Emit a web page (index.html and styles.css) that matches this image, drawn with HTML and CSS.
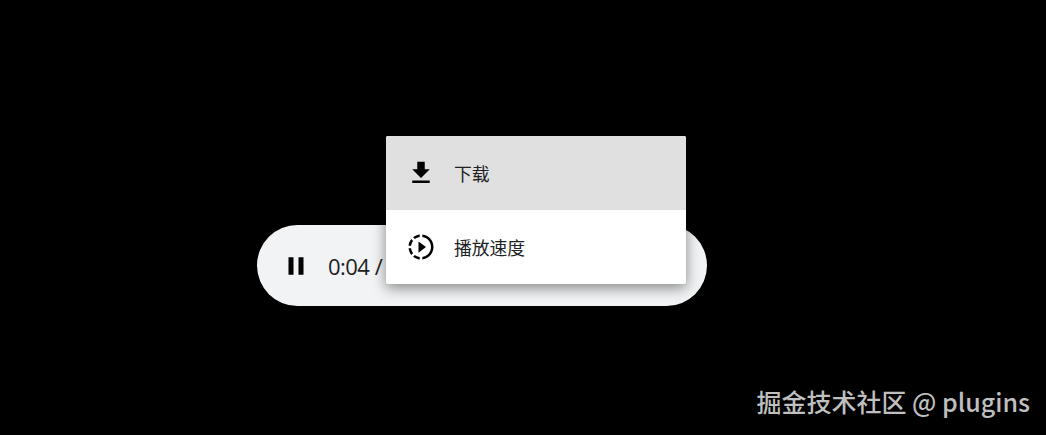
FILE: index.html
```html
<!DOCTYPE html>
<html lang="zh-CN">
<head>
    <meta charset="UTF-8">
    <meta name="viewport" content="width=device-width, initial-scale=1.0">
    <title>音频播放器</title>
    <link rel="stylesheet" href="styles.css">
</head>
<body>

    <div class="player">
        <button class="play-btn" aria-label="暂停">
            <svg class="icon" viewBox="0 0 24 24"><path d="M6 19h4V5H6v14zm8-14v14h4V5h-4z"/></svg>
        </button>
        <span class="time">0:04 /</span>

        <ul class="menu">
            <li class="menu-item active">
                <svg class="icon" viewBox="0 0 24 24"><path d="M19 9h-4V3H9v6H5l7 7 7-7zM5 18v2h14v-2H5z"/></svg>
                <span>下载</span>
            </li>
            <li class="menu-item">
                <svg class="icon" viewBox="0 0 24 24"><path d="M10 7.5v9l6-4.5-6-4.5zM11 4.07V2.05c-2.01.2-3.84 1-5.32 2.21L7.1 5.69c1.11-.86 2.44-1.44 3.9-1.62zM5.69 7.1L4.26 5.68C3.05 7.16 2.25 8.99 2.05 11h2.02c.18-1.46.76-2.79 1.62-3.9zM4.07 13H2.05c.2 2.01 1 3.84 2.21 5.32l1.43-1.43c-.86-1.1-1.44-2.43-1.62-3.89zm1.61 6.74C7.16 20.95 9 21.75 11 21.95v-2.02c-1.46-.18-2.79-.76-3.9-1.62l-1.42 1.43zM22 12c0 5.16-3.92 9.42-8.95 9.95v-2.02C16.97 19.41 20 16.05 20 12s-3.03-7.41-6.95-7.93V2.05C18.08 2.58 22 6.84 22 12z"/></svg>
                <span>播放速度</span>
            </li>
        </ul>
    </div>

    <div class="watermark">掘金技术社区 @ plugins</div>

</body>
</html>
```
FILE: styles.css
```css
body {
    margin: 0;
    height: 435px;
    box-sizing: border-box;
    padding: 225px 16px 0 257px;
    display: flex;
    flex-direction: column;
    background-color: #000;
    font-family: "Noto Sans CJK SC", sans-serif;
    overflow: hidden;
}
.player {
    position: relative;
    display: flex;
    align-items: center;
    width: 450px;
    height: 81px;
    box-sizing: border-box;
    padding-left: 24px;
    border-radius: 41px;
    background-color: #f1f3f4;
}
.icon {
    display: block;
    width: 30px;
    height: 30px;
    fill: #000;
}
.play-btn {
    padding: 0;
    border: none;
    background: none;
    cursor: pointer;
}
.time {
    margin-left: 17px;
    font-family: "Open Sans", sans-serif;
    font-size: 22px;
    letter-spacing: -0.6px;
    word-spacing: 0.5px;
    line-height: 30px;
    color: #202124;
}
/* overflow menu opens on top of the player */
.menu {
    position: absolute;
    left: 129px;
    top: -89px;
    width: 300px;
    margin: 0;
    padding: 0;
    list-style: none;
    background-color: #fff;
    border-radius: 2px;
    box-shadow: 0 4px 14px rgba(0, 0, 0, 0.45);
    overflow: hidden;
}
.menu-item {
    display: flex;
    align-items: center;
    gap: 18px;
    height: 74px;
    box-sizing: border-box;
    padding-left: 20px;
    font-size: 17.8px;
    color: #202124;
}
.menu-item.active {
    background-color: #e0e0e0;
}
.watermark {
    margin-top: 77px;
    text-align: right;
    font-size: 25px;
    font-weight: 500;
    line-height: 37px;
    color: #bfbfbf;
}
```
